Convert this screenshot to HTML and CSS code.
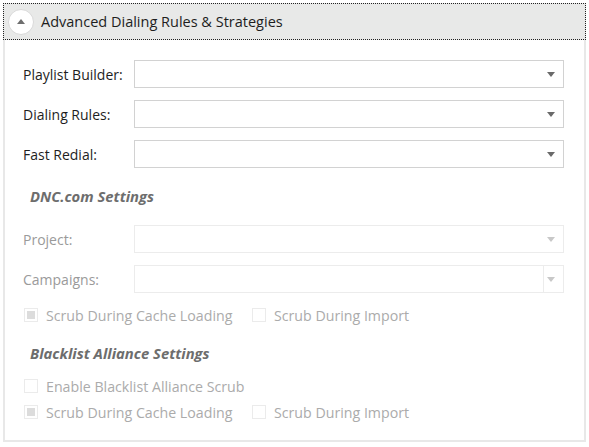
FILE: index.html
```html
<!DOCTYPE html>
<html>
<head>
<meta charset="utf-8">
<link rel="stylesheet" href="styles.css">
</head>
<body>
<div class="expander">
  <div class="header">
    <span class="toggle"><svg width="8" height="5" viewBox="0 0 8 5"><path d="M0 5 L4 0 L8 5 Z" fill="#6e6e6e"/></svg></span>
    <span class="title">Advanced Dialing Rules &amp; Strategies</span>
  </div>
  <div class="body">
    <div class="row">
      <span class="label">Playlist Builder:</span>
      <div class="combo"><span class="arrow"></span></div>
    </div>
    <div class="row">
      <span class="label">Dialing Rules:</span>
      <div class="combo"><span class="arrow"></span></div>
    </div>
    <div class="row">
      <span class="label">Fast Redial:</span>
      <div class="combo"><span class="arrow"></span></div>
    </div>

    <div class="section">DNC.com Settings</div>
    <div class="row disabled">
      <span class="label">Project:</span>
      <div class="combo"><span class="arrow"></span></div>
    </div>
    <div class="row disabled">
      <span class="label">Campaigns:</span>
      <div class="combo"><span class="sep"></span><span class="arrow"></span></div>
    </div>
    <div class="checks first">
      <span class="check"><span class="box filled"></span>Scrub During Cache Loading</span>
      <span class="check"><span class="box"></span>Scrub During Import</span>
    </div>

    <div class="section second">Blacklist Alliance Settings</div>
    <div class="checks enable">
      <span class="check"><span class="box"></span>Enable Blacklist Alliance Scrub</span>
    </div>
    <div class="checks last">
      <span class="check"><span class="box filled"></span>Scrub During Cache Loading</span>
      <span class="check"><span class="box"></span>Scrub During Import</span>
    </div>
  </div>
</div>
</body>
</html>
```
FILE: styles.css
```css
html, body {
  margin: 0;
  padding: 0;
  background: #ffffff;
}
body {
  font-family: "Open Sans", "Noto Sans", sans-serif;
  color: #1e1e1e;
}
.expander {
  margin: 3px 3px 0 3px;
  width: 583px;
}
.header {
  height: 37px;
  box-sizing: border-box;
  background: #e8e9e8;
  border: 1px dotted #222;
  display: flex;
  align-items: center;
  padding-left: 4px;
}
.toggle {
  width: 26px;
  height: 26px;
  box-sizing: border-box;
  border-radius: 50%;
  background: #ffffff;
  border: 1px solid #d9d9d9;
  display: flex;
  align-items: center;
  justify-content: center;
}
.title {
  margin-left: 7px;
  font-size: 14.5px;
  color: #1e1e1e;
}
.body {
  border: 2px solid #e8e8e8;
  border-top: none;
  height: 402px;
  box-sizing: border-box;
  padding: 20px 20px 0 18px;
}
.row {
  display: flex;
  align-items: center;
  height: 28px;
  margin-bottom: 12px;
}
.label {
  width: 111px;
  font-size: 14px;
  color: #1e1e1e;
}
.combo {
  flex: 1;
  height: 28px;
  box-sizing: border-box;
  border: 1px solid #d2d2d2;
  position: relative;
  background: #fff;
}
.arrow {
  position: absolute;
  right: 8px;
  top: 11px;
  width: 0;
  height: 0;
  border-left: 4px solid transparent;
  border-right: 4px solid transparent;
  border-top: 5px solid #6a6a6a;
}
.disabled .label {
  color: #9a9a9a;
}
.disabled .combo {
  border-color: #ececec;
}
.disabled .arrow {
  border-top-color: #c8c8c8;
}
.sep {
  position: absolute;
  right: 19px;
  top: 0;
  bottom: 0;
  width: 1px;
  background: #ececec;
}
.section {
  font-weight: bold;
  font-style: italic;
  font-size: 14.8px;
  color: #6d6d6d;
  margin: 18px 0 0 7px;
  height: 20px;
  line-height: 20px;
  margin-bottom: 19px;
}
.section.second {
  margin-top: 18px;
  margin-bottom: 13px;
}
.checks {
  display: flex;
  height: 20px;
  align-items: center;
  font-size: 14.2px;
  color: #ababab;
  margin-left: 1px;
}
.checks.first {
  margin-top: 1px;
}
.checks.enable {
  margin-bottom: 6px;
}
.check {
  display: flex;
  align-items: center;
  width: 228px;
}
.box {
  width: 14px;
  height: 14px;
  box-sizing: border-box;
  border: 1px solid #ebebeb;
  margin-right: 8px;
  display: flex;
  align-items: center;
  justify-content: center;
  background: #fff;
}
.box.filled::after {
  content: "";
  width: 8px;
  height: 8px;
  background: #dcdcdc;
}
```
